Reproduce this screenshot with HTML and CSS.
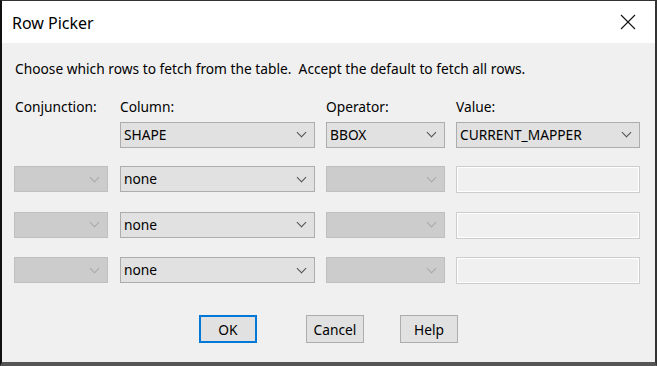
FILE: index.html
```html
<!DOCTYPE html>
<html lang="en">
<head>
    <meta charset="UTF-8">
    <title>Row Picker</title>
    <link rel="stylesheet" href="styles.css">
</head>
<body>
    <div class="dialog">
        <div class="titlebar">
            <span class="title">Row Picker</span>
            <svg class="close" width="16" height="16" viewBox="0 0 16 16">
                <path d="M1 1 L15 15 M15 1 L1 15" stroke="#111" stroke-width="1.1" fill="none"/>
            </svg>
        </div>
        <div class="content">
            <p class="intro">Choose which rows to fetch from the table.&nbsp; Accept the default to fetch all rows.</p>

            <div class="grid">
                <!-- header labels -->
                <label class="lbl lbl-first">Conjunction:</label>
                <label class="lbl">Column:</label>
                <label class="lbl">Operator:</label>
                <label class="lbl">Value:</label>

                <!-- row 1 -->
                <div></div>
                <div class="combo"><span>SHAPE</span><i class="chev"></i></div>
                <div class="combo"><span>BBOX</span><i class="chev"></i></div>
                <div class="combo"><span>CURRENT_MAPPER</span><i class="chev"></i></div>

                <!-- row 2 -->
                <div class="combo combo-off small"><i class="chev"></i></div>
                <div class="combo"><span>none</span><i class="chev"></i></div>
                <div class="combo combo-off"><i class="chev"></i></div>
                <div class="textbox"></div>

                <!-- row 3 -->
                <div class="combo combo-off small"><i class="chev"></i></div>
                <div class="combo"><span>none</span><i class="chev"></i></div>
                <div class="combo combo-off"><i class="chev"></i></div>
                <div class="textbox"></div>

                <!-- row 4 -->
                <div class="combo combo-off small"><i class="chev"></i></div>
                <div class="combo"><span>none</span><i class="chev"></i></div>
                <div class="combo combo-off"><i class="chev"></i></div>
                <div class="textbox"></div>
            </div>

            <div class="buttons">
                <button class="btn btn-default">OK</button>
                <button class="btn">Cancel</button>
                <button class="btn">Help</button>
            </div>
        </div>
    </div>
</body>
</html>
```

FILE: styles.css
```css
* {
    margin: 0;
    padding: 0;
    box-sizing: border-box;
}

body {
    font-family: 'Noto Sans', 'Open Sans', sans-serif;
    font-size: 13.75px;
    color: #000;
    background: #fff;
}

.dialog {
    width: 657px;
    height: 366px;
    background: #f0f0f0;
    border-left: 2px solid #111;
    border-top: 1px solid #333;
    border-right: 2px solid #333;
    border-bottom: 4px solid #555;
    display: flex;
    flex-direction: column;
}

.titlebar {
    height: 42px;
    background: #fff;
    display: flex;
    align-items: center;
    justify-content: space-between;
    padding: 0 19px 0 10px;
}

.title {
    font-size: 16px;
    color: #000;
    margin-top: 1px;
}

.close {
    display: block;
}

.content {
    flex: 1;
    padding: 0 14px 0 12px;
}

.intro {
    margin-top: 16px;
    padding-left: 1px;
    line-height: 20px;
}

.grid {
    display: grid;
    grid-template-columns: 95px 195px 119px 184px;
    column-gap: 11px;
    row-gap: 18.5px;
    margin-top: 18px;
}

.lbl {
    line-height: 19px;
    margin-bottom: -13px;
}

.lbl-first {
    padding-left: 1px;
}

.combo {
    height: 26px;
    background: #e1e1e1;
    border: 1px solid #adadad;
    display: flex;
    align-items: center;
    justify-content: space-between;
    padding: 0 7px 0 3px;
}

.combo span {
    line-height: 20px;
}

.combo-off {
    background: #cccccc;
    border-color: #bfbfbf;
}

.small {
    width: 94px;
}

.chev {
    width: 7px;
    height: 7px;
    border-right: 1px solid #505050;
    border-bottom: 1px solid #505050;
    transform: rotate(45deg);
    margin-top: -4px;
    margin-right: 2px;
}

.combo-off .chev {
    border-color: #a8a8a8;
    margin-left: auto;
}

.textbox {
    height: 27px;
    background: #f0f0f0;
    border: 1px solid #cccccc;
    box-shadow: inset 0 0 0 1px #fff;
}

.buttons {
    display: flex;
    margin-top: 31px;
    padding-left: 185px;
}

.btn {
    width: 58px;
    height: 28px;
    background: #e1e1e1;
    border: 1px solid #adadad;
    font-family: inherit;
    font-size: 13.75px;
    color: #000;
    margin-right: 36px;
}

.btn-default {
    border: 2px solid #0078d7;
    margin-right: 49px;
}
```
